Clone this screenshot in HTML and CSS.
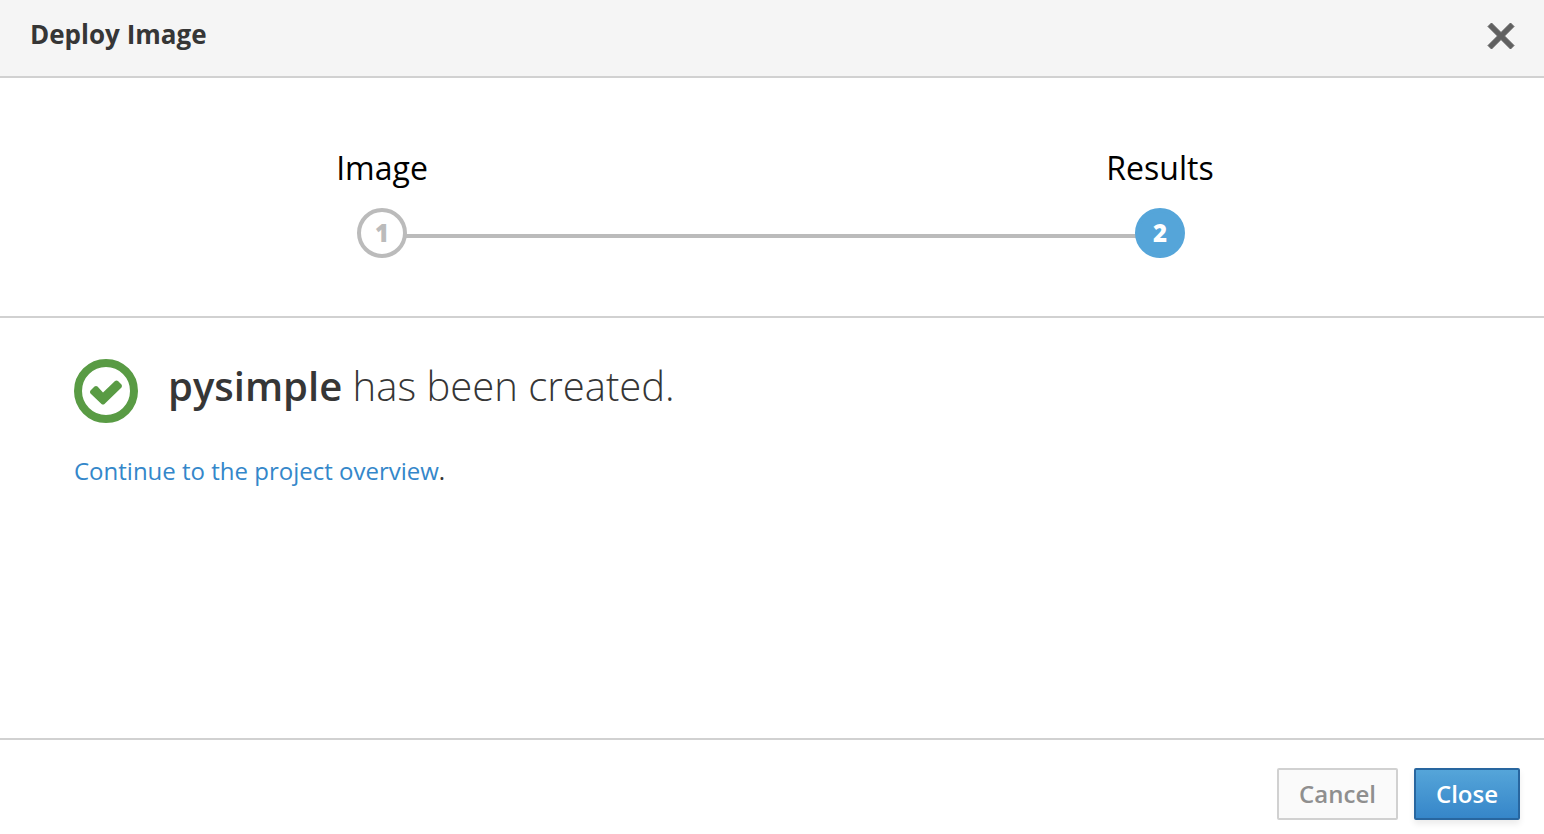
FILE: index.html
```html
<!DOCTYPE html>
<html lang="en">
<head>
<meta charset="utf-8">
<title>Deploy Image</title>
<link rel="stylesheet" href="styles.css">
</head>
<body>
<div class="wizard" role="dialog" aria-labelledby="wizard-title">
  <header class="wizard-header">
    <h1 class="wizard-title" id="wizard-title">Deploy Image</h1>
    <button class="dismiss" type="button" aria-label="Dismiss">
      <svg viewBox="0 0 28 28" width="28" height="28" aria-hidden="true"><path d="M4.500 1 14 10.500 23.500 1 27 4.500 17.500 14 27 23.500 23.500 27 14 17.500 4.500 27 1 23.500 10.500 14 1 4.500Z"/></svg>
    </button>
  </header>
  <ol class="steps">
    <li class="step">
      <span class="step-label">Image</span>
      <span class="step-number">1</span>
    </li>
    <li class="step active">
      <span class="step-label">Results</span>
      <span class="step-number">2</span>
    </li>
  </ol>
  <main class="results">
    <div class="result-heading">
      <svg class="ok-icon" viewBox="0 0 64 64" width="64" height="64" aria-hidden="true"><circle cx="32" cy="32" r="28"/><path d="M16.500 31.500 20.500 27.500Q22 26.500 23.500 27.500L29 33.500 41 22Q42.500 21 44 22L47.500 25.500Q48.500 27 47.500 28.500L30.500 45Q29 46.200 27.500 45L16.500 34.500Q15.200 33 16.500 31.500Z"/></svg>
      <h2 class="result-text"><strong>pysimple</strong> has been created.</h2>
    </div>
    <p class="next"><a href="#overview">Continue to the project overview</a>.</p>
  </main>
  <footer class="wizard-footer">
    <button class="btn btn-default" type="button" disabled>Cancel</button>
    <button class="btn btn-primary" type="button">Close</button>
  </footer>
</div>
</body>
</html>
```
FILE: styles.css
```css
* { box-sizing: border-box; }
body {
  margin: 0;
  font-family: "Open Sans", "Noto Sans", sans-serif;
  font-size: 24px;
  line-height: 40px;
  color: #363636;
  background: #fff;
}
.wizard {
  display: flex;
  flex-direction: column;
  min-height: 100vh;
}
.wizard-header {
  display: flex;
  justify-content: space-between;
  align-items: flex-end;
  padding: 14px 29px 22px 30px;
  background: #f5f5f5;
  border-bottom: 2px solid #d1d1d1;
}
.wizard-title {
  margin: 0;
  font-size: 26px;
  font-weight: 700;
}
.dismiss {
  display: flex;
  margin-bottom: 4px;
  padding: 0;
  border: 0;
  background: none;
}
.dismiss svg {
  fill: #606060;
  stroke: #606060;
  stroke-width: 1;
  stroke-linejoin: round;
}
.steps {
  position: relative;
  display: flex;
  justify-content: space-between;
  margin: 0;
  padding: 66px 330px 58px 328px;
  list-style: none;
  border-bottom: 2px solid #d1d1d1;
}
.steps::before {
  content: "";
  position: absolute;
  left: 382px;
  right: 384px;
  bottom: 78px;
  height: 4px;
  background: #bbb;
}
.step {
  display: flex;
  flex: 0 0 108px;
  flex-direction: column;
  align-items: center;
  gap: 16px;
}
.step-label {
  font-size: 32px;
  line-height: 48px;
  color: #000;
}
.step-number {
  position: relative;
  display: flex;
  align-items: center;
  justify-content: center;
  width: 50px;
  height: 50px;
  border: 4px solid #bbb;
  border-radius: 50%;
  background: #fff;
  color: #bbb;
  font-weight: 800;
}
.active .step-number {
  border-color: #55a5d9;
  background: #55a5d9;
  color: #fff;
}
.results {
  flex: 1;
  padding: 41px 74px;
}
.result-heading {
  display: flex;
  gap: 30px;
}
.ok-icon circle {
  fill: none;
  stroke: #599b44;
  stroke-width: 8;
}
.ok-icon path { fill: #599b44; }
.result-text {
  margin: 0;
  font-size: 40px;
  line-height: 54px;
  font-weight: 300;
}
.result-text strong { font-weight: 600; }
.next { margin: 28px 0 0; }
.next a {
  color: #3487ca;
  text-decoration: none;
}
.wizard-footer {
  display: flex;
  justify-content: flex-end;
  gap: 16px;
  padding: 28px 24px 14px;
  border-top: 2px solid #d1d1d1;
}
.btn {
  padding: 2px 20px;
  border: 2px solid #d1d1d1;
  border-radius: 2px;
  font: 600 24px/44px "Open Sans", "Noto Sans", sans-serif;
}
.btn-default {
  background: #fafafa;
  color: #8f8f8f;
}
.btn-primary {
  border-color: #28669f;
  background: linear-gradient(#55a5d9, #3686c9);
  box-shadow: 0 4px 6px rgba(0, 0, 0, 0.08);
  color: #fff;
}
```
